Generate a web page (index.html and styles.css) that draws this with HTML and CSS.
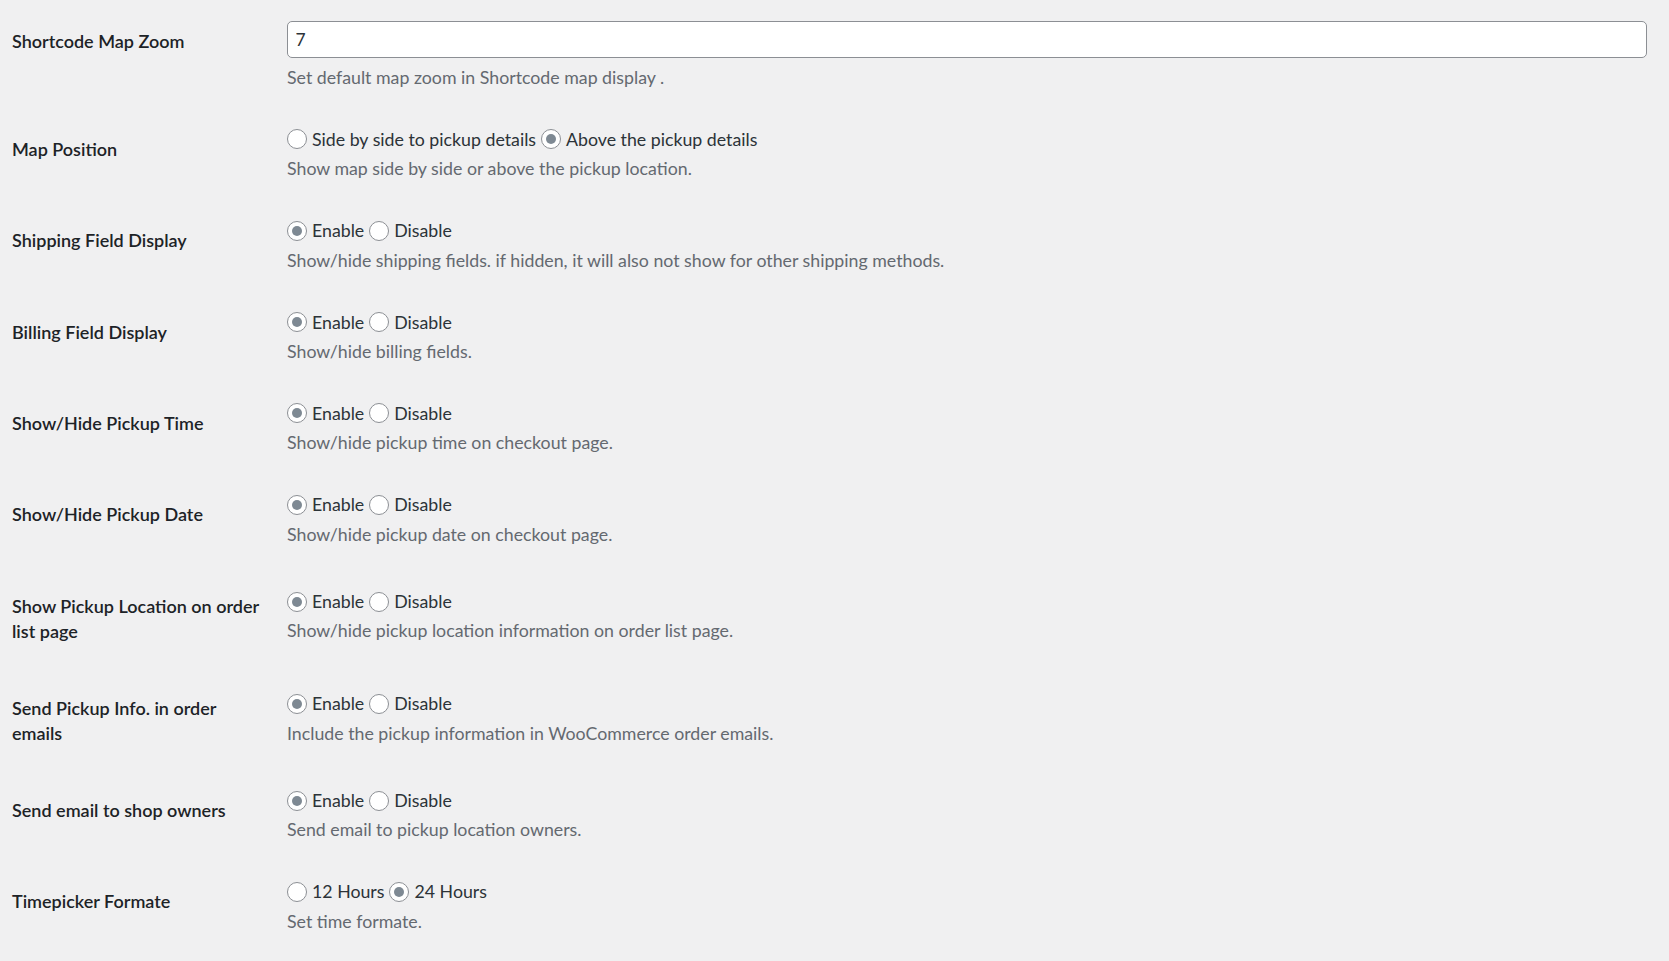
FILE: index.html
```html
<!DOCTYPE html>
<html lang="en">
<head>
<meta charset="utf-8">
<title>Pickup Settings</title>
<link rel="stylesheet" href="styles.css">
</head>
<body>
<div class="wrap">
<table class="form-table">
<tbody>
<tr>
<th scope="row">Shortcode Map Zoom</th>
<td>
<input class="text-input" type="text" value="7">
<p class="description first-desc">Set default map zoom in Shortcode map display .</p>
</td>
</tr>
<tr>
<th scope="row">Map Position</th>
<td>
<div class="choices">
<label class="choice"><input class="radio" type="radio" name="map_pos">Side by side to pickup details</label>
<label class="choice"><input class="radio" type="radio" name="map_pos" checked>Above the pickup details</label>
</div>
<p class="description">Show map side by side or above the pickup location.</p>
</td>
</tr>
<tr>
<th scope="row">Shipping Field Display</th>
<td>
<div class="choices">
<label class="choice"><input class="radio" type="radio" name="ship" checked>Enable</label>
<label class="choice"><input class="radio" type="radio" name="ship">Disable</label>
</div>
<p class="description">Show/hide shipping fields. if hidden, it will also not show for other shipping methods.</p>
</td>
</tr>
<tr>
<th scope="row">Billing Field Display</th>
<td>
<div class="choices">
<label class="choice"><input class="radio" type="radio" name="bill" checked>Enable</label>
<label class="choice"><input class="radio" type="radio" name="bill">Disable</label>
</div>
<p class="description">Show/hide billing fields.</p>
</td>
</tr>
<tr>
<th scope="row">Show/Hide Pickup Time</th>
<td>
<div class="choices">
<label class="choice"><input class="radio" type="radio" name="ptime" checked>Enable</label>
<label class="choice"><input class="radio" type="radio" name="ptime">Disable</label>
</div>
<p class="description">Show/hide pickup time on checkout page.</p>
</td>
</tr>
<tr>
<th scope="row">Show/Hide Pickup Date</th>
<td>
<div class="choices">
<label class="choice"><input class="radio" type="radio" name="pdate" checked>Enable</label>
<label class="choice"><input class="radio" type="radio" name="pdate">Disable</label>
</div>
<p class="description">Show/hide pickup date on checkout page.</p>
</td>
</tr>
<tr>
<th scope="row">Show Pickup Location on order list page</th>
<td>
<div class="choices">
<label class="choice"><input class="radio" type="radio" name="ploc" checked>Enable</label>
<label class="choice"><input class="radio" type="radio" name="ploc">Disable</label>
</div>
<p class="description">Show/hide pickup location information on order list page.</p>
</td>
</tr>
<tr>
<th scope="row">Send Pickup Info. in order emails</th>
<td>
<div class="choices">
<label class="choice"><input class="radio" type="radio" name="pinfo" checked>Enable</label>
<label class="choice"><input class="radio" type="radio" name="pinfo">Disable</label>
</div>
<p class="description">Include the pickup information in WooCommerce order emails.</p>
</td>
</tr>
<tr>
<th scope="row">Send email to shop owners</th>
<td>
<div class="choices">
<label class="choice"><input class="radio" type="radio" name="owners" checked>Enable</label>
<label class="choice"><input class="radio" type="radio" name="owners">Disable</label>
</div>
<p class="description">Send email to pickup location owners.</p>
</td>
</tr>
<tr>
<th scope="row">Timepicker Formate</th>
<td>
<div class="choices">
<label class="choice"><input class="radio" type="radio" name="tfmt">12 Hours</label>
<label class="choice"><input class="radio" type="radio" name="tfmt" checked>24 Hours</label>
</div>
<p class="description">Set time formate.</p>
</td>
</tr>
</tbody>
</table>
</div>
</body>
</html>
```
FILE: styles.css
```css
html, body {
  margin: 0;
  background: #f0f0f1;
}

body {
  font-family: Lato, "Open Sans", "Liberation Sans", sans-serif;
  color: #3c434a;
}

.wrap {
  padding: 0 10px 0 12px;
}

.form-table {
  width: 100%;
  table-layout: fixed;
  border-collapse: collapse;
  margin-top: 3.9px;
}

.form-table th {
  width: 250px;
  padding: 25.5px 12.5px 25.5px 0;
  text-align: left;
  vertical-align: top;
  font-weight: 600;
  font-size: 18px;
  line-height: 25.6px;
  color: #1d2327;
}

.form-table td {
  padding: 16.6px 12.5px 18.4px;
  vertical-align: middle;
  font-size: 17.75px;
  line-height: 23px;
}

.text-input {
  display: block;
  width: 100%;
  box-sizing: border-box;
  height: 37px;
  margin: 0.8px 0 0;
  padding: 0 7.5px;
  border: 1px solid #8c8f94;
  border-radius: 5px;
  background: #fff;
  font-family: Lato, "Open Sans", sans-serif;
  font-size: 17.5px;
  color: #2c3338;
  outline: none;
}

.choices {
  display: flex;
  align-items: center;
  gap: 5px;
  height: 23px;
}

.choice {
  display: flex;
  align-items: center;
  color: #2c3338;
}

.radio {
  appearance: none;
  -webkit-appearance: none;
  display: grid;
  place-items: center;
  box-sizing: border-box;
  width: 20px;
  height: 20px;
  margin: 0 5px 0 0;
  border: 1px solid #8c8f94;
  border-radius: 50%;
  background: #fff;
}

.radio:checked::before {
  content: "";
  width: 10px;
  height: 10px;
  border-radius: 50%;
  background: #7e8993;
}

.description {
  margin: 6.3px 0 4.1px;
  color: #646970;
}

.first-desc {
  margin-top: 7.5px;
}
```
